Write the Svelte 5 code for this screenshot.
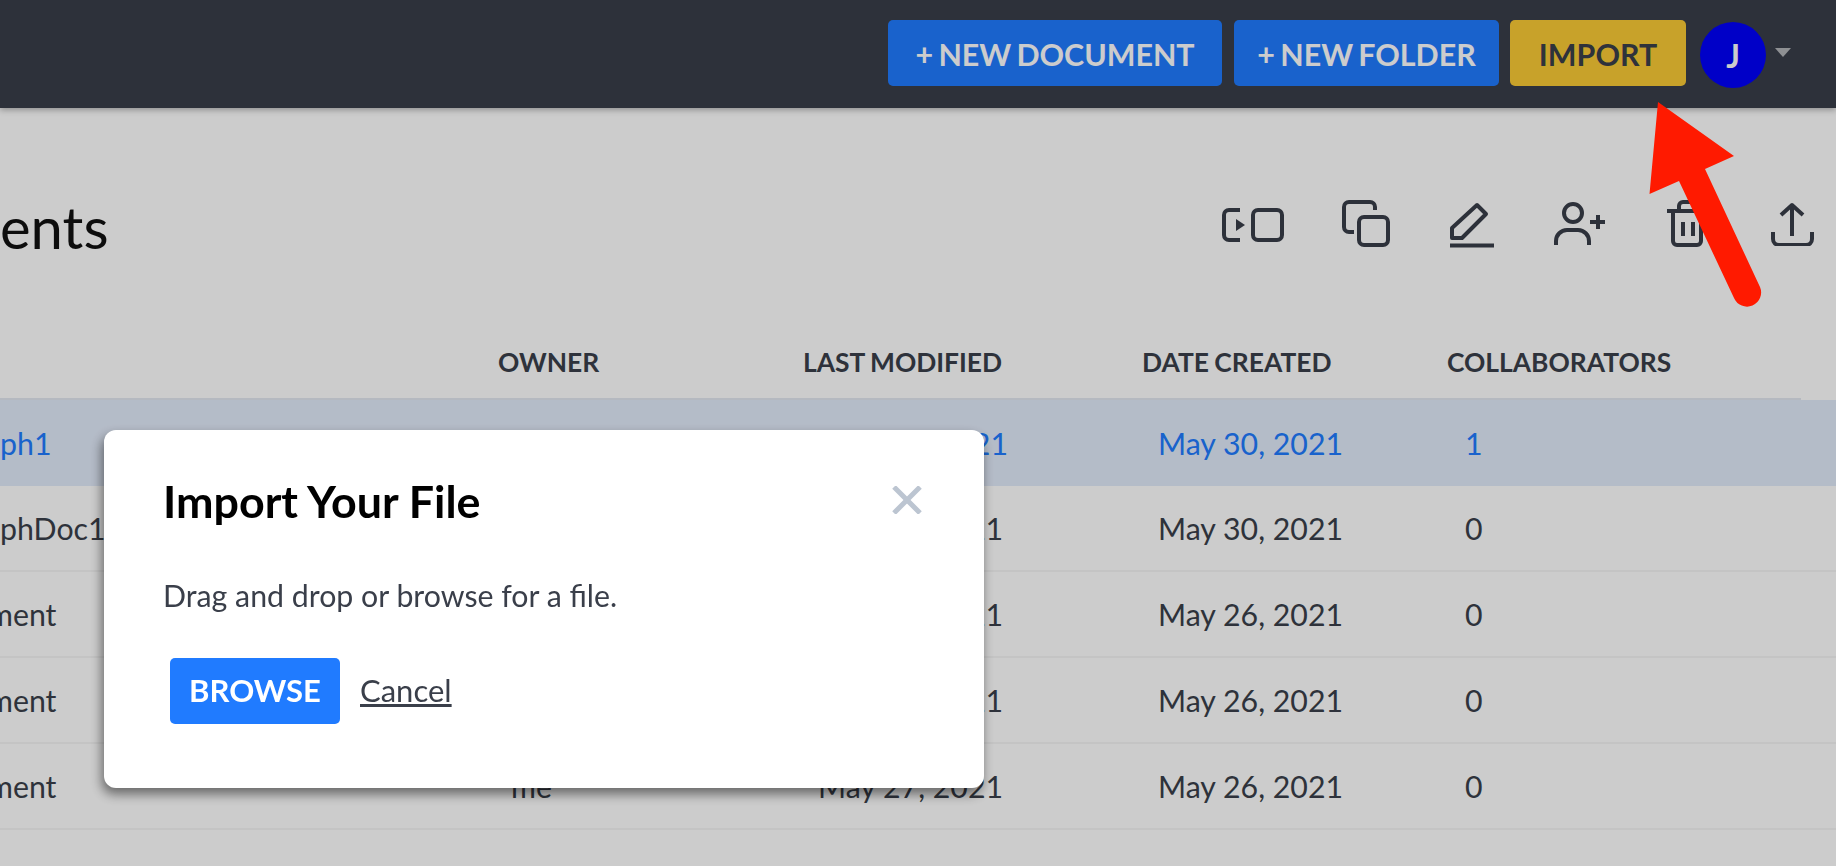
<script lang="ts">
  const rows = [
    { name: 'ph1', owner: 'me', modified: 'June 21, 2021', created: 'May 30, 2021', count: 1, active: true },
    { name: 'phDoc1', owner: 'me', modified: 'May 30, 2021', created: 'May 30, 2021', count: 0 },
    { name: 'ment', owner: 'me', modified: 'May 27, 2021', created: 'May 26, 2021', count: 0, cut: true },
    { name: 'ment', owner: 'me', modified: 'May 27, 2021', created: 'May 26, 2021', count: 0, cut: true },
    { name: 'ment', owner: 'me', modified: 'May 27, 2021', created: 'May 26, 2021', count: 0, cut: true }
  ];
</script>

<div class="page">
  <header class="topbar">
    <button class="btn blue doc">+ NEW DOCUMENT</button>
    <button class="btn blue folder">+ NEW FOLDER</button>
    <button class="btn gold">IMPORT</button>
    <div class="avatar">J</div>
    <span class="caret"></span>
  </header>

  <section class="heading">
    <h1>ents</h1>
    <div class="tools">
      <svg class="i1" viewBox="0 0 62 34"><path d="M18 2H7a5 5 0 0 0-5 5v20a5 5 0 0 0 5 5h11" /><path class="solid" d="M14 11l9 6-9 6z" /><rect x="31" y="2" width="29" height="30" rx="5" /></svg>
      <svg class="i2" viewBox="0 0 48 47"><path d="M12 32H7a5 5 0 0 1-5-5V7a5 5 0 0 1 5-5h21a5 5 0 0 1 5 5v3" /><rect x="17" y="17" width="29" height="28" rx="5" /></svg>
      <svg class="i3" viewBox="0 0 44 46"><path d="M2 36V26L27 3l9 9-24 24z" /><path d="M0 43.500h44" /></svg>
      <svg class="i4" viewBox="0 0 52 44"><circle cx="19" cy="11" r="9" /><path d="M2 43v-4a11 11 0 0 1 11-11h11a11 11 0 0 1 11 11v4M36 20h15M44 13v14" /></svg>
      <svg class="i5" viewBox="0 0 42 47"><path d="M1 11h40M13 10V6a4 4 0 0 1 4-4h8a4 4 0 0 1 4 4v4M7 11v30a4 4 0 0 0 4 4h20a4 4 0 0 0 4-4V11M17 22v14M27 22v14" /></svg>
      <svg class="i6" viewBox="0 0 45 44"><path d="M22 34V3M11 13L22 3l11 10M3 30v7a6 6 0 0 0 6 6h27a6 6 0 0 0 6-6v-7" /></svg>
    </div>
  </section>

  <div class="table">
    <div class="row head">
      <span></span>
      <span>OWNER</span>
      <span>LAST MODIFIED</span>
      <span>DATE CREATED</span>
      <span>COLLABORATORS</span>
    </div>
    {#each rows as row}
      <div class="row body" class:active={row.active}>
        <span class:cut={row.cut}>{row.name}</span>
        <span class="cell owner">{row.owner}</span>
        <span class="cell">{row.modified}</span>
        <span class="cell date">{row.created}</span>
        <span class="cell count">{row.count}</span>
      </div>
    {/each}
  </div>
</div>

<div class="overlay"></div>

<div class="modal">
  <div class="modal-head">
    <h2>Import Your File</h2>
    <svg class="close" viewBox="0 0 30 28"><path d="M2 1l26 26M28 1L2 27" /></svg>
  </div>
  <p>Drag and drop or browse for a file.</p>
  <div class="actions">
    <button class="browse">BROWSE</button>
    <button class="cancel">Cancel</button>
  </div>
</div>

<svg class="arrow" viewBox="0 0 1836 866">
  <path d="M1658 102L1734 156 1705 169 1760 287A14 14 0 0 1 1734 298L1679 181 1649.500 194Z" />
</svg>

<style>
  :global(body) {
    margin: 0;
    background: #fff;
    overflow: hidden;
  }

  .page {
    width: 1836px;
    height: 866px;
    font-family: Lato, "Open Sans", sans-serif;
    color: #3a3f4a;
    background: #fff;
    overflow: hidden;
  }

  .topbar {
    height: 108px;
    box-sizing: border-box;
    padding: 20px 45px 0 0;
    display: flex;
    justify-content: flex-end;
    align-items: flex-start;
    background: #393e49;
    box-shadow: 0 2px 6px rgba(0, 0, 0, 0.3);
  }

  .btn {
    height: 66px;
    border: 0;
    border-radius: 5px;
    font-family: inherit;
    font-size: 30.400px;
    font-weight: 700;
    word-spacing: -2px;
    padding: 2px 0 0;
  }

  .blue {
    background: #207bff;
    color: #fff;
  }

  .doc {
    width: 334px;
    margin-right: 12px;
  }

  .folder {
    width: 265px;
    margin-right: 11px;
  }

  .gold {
    width: 176px;
    background: #fbcb35;
    color: #3a3f4a;
  }

  .avatar {
    width: 66px;
    height: 66px;
    margin: 2px 0 0 14px;
    border-radius: 50%;
    background: #0000fa;
    color: #fff;
    font-size: 32px;
    font-weight: 700;
    display: flex;
    align-items: center;
    justify-content: center;
  }

  .caret {
    margin: 28px 0 0 9px;
    width: 0;
    height: 0;
    border-left: 8px solid transparent;
    border-right: 8px solid transparent;
    border-top: 9px solid #b2b4b8;
  }

  .heading {
    height: 192px;
    box-sizing: border-box;
    padding-top: 92px;
    display: flex;
    justify-content: space-between;
    align-items: flex-start;
  }

  h1 {
    margin: -3px 0 0;
    font-size: 58px;
    font-weight: 400;
    line-height: 60px;
    color: #111;
  }

  .tools {
    display: flex;
    align-items: flex-start;
    padding-right: 21px;
  }

  .tools svg {
    fill: none;
    stroke: #393e49;
    stroke-width: 4;
    stroke-linejoin: round;
    display: block;
  }

  .tools .solid {
    fill: #393e49;
    stroke: none;
  }

  .i1 { width: 62px; height: 34px; margin-top: 8px; }
  .i2 { width: 48px; height: 47px; margin-left: 58px; }
  .i3 { width: 44px; height: 46px; margin-left: 60px; margin-top: 2px; }
  .i4 { width: 52px; height: 44px; margin-left: 60px; margin-top: 2px; }
  .i5 { width: 42px; height: 47px; margin-left: 60px; }
  .i6 { width: 45px; height: 44px; margin-left: 62px; margin-top: 2px; }

  .table {
    display: flex;
    flex-direction: column;
  }

  .row {
    display: grid;
    grid-template-columns: 498px 305px 339px 305px 1fr;
    align-items: center;
    box-sizing: border-box;
  }

  .head {
    height: 100px;
    padding-top: 26px;
    font-size: 26.400px;
    font-weight: 700;
    word-spacing: -1px;
    margin-right: 35px;
    border-bottom: 2px solid #e3e8f0;
  }

  .body {
    height: 86px;
    font-size: 30.300px;
    border-bottom: 2px solid #f5f5f5;
  }

  .cell {
    padding-left: 15px;
  }

  .owner {
    padding-left: 13px;
  }

  .date {
    padding-left: 16px;
  }

  .count {
    padding-left: 18px;
  }

  .cut {
    margin-left: -12px;
  }

  .active {
    background: #e2ebfa;
    color: #207bff;
    border-bottom: 0;
  }

  .overlay {
    position: fixed;
    inset: 0;
    background: rgba(0, 0, 0, 0.2);
  }

  .modal {
    position: fixed;
    left: 104px;
    top: 430px;
    width: 880px;
    height: 358px;
    box-sizing: border-box;
    padding: 46px 62px 0 59px;
    background: #fff;
    border-radius: 12px;
    box-shadow: -2px 6px 12px rgba(0, 0, 0, 0.5);
    font-family: Lato, "Open Sans", sans-serif;
    color: #3a3f4a;
  }

  .modal-head {
    display: flex;
    justify-content: space-between;
    align-items: flex-start;
  }

  h2 {
    margin: 0;
    font-size: 44.800px;
    line-height: 50px;
    font-weight: 700;
    color: #000;
  }

  .close {
    width: 30px;
    height: 28px;
    margin-top: 10px;
    fill: none;
    stroke: #bcc5d1;
    stroke-width: 5;
  }

  p {
    margin: 51px 0 0;
    font-size: 30.300px;
    line-height: 36px;
  }

  .actions {
    margin: 45px 0 0 7px;
    display: flex;
    align-items: center;
    gap: 20px;
  }

  .browse {
    width: 170px;
    height: 66px;
    border: 0;
    border-radius: 5px;
    background: #207bff;
    color: #fff;
    font-family: inherit;
    font-size: 31px;
    font-weight: 700;
    padding: 0 0 2px;
  }

  .cancel {
    border: 0;
    background: none;
    padding: 0 0 2px;
    font-family: inherit;
    font-size: 31px;
    color: inherit;
    text-decoration: underline;
  }

  .arrow {
    position: fixed;
    inset: 0;
    width: 1836px;
    height: 866px;
    fill: #ff1a00;
    pointer-events: none;
  }
</style>
